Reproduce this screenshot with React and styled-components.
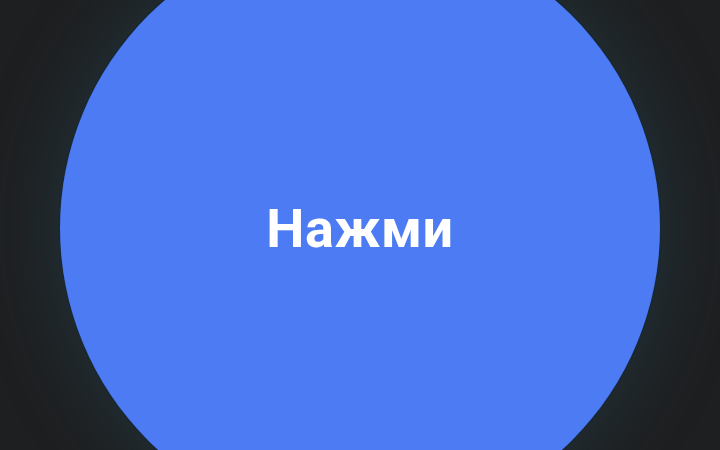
import React from "react";
import styled, { createGlobalStyle } from "styled-components";

const GlobalStyle = createGlobalStyle`
  html, body {
    margin: 0;
    padding: 0;
    background: #1e1f21;
    overflow: hidden;
  }
`;

const Screen = styled.div`
  width: 720px;
  height: 450px;
  display: flex;
  align-items: center;
  justify-content: center;
  overflow: hidden;
  background: #1e1f21;
`;

const Circle = styled.button`
  flex: 0 0 auto;
  width: 600px;
  height: 600px;
  margin-top: 6px;
  border: none;
  border-radius: 50%;
  background: #4d7bf3;
  box-shadow: 0 0 1px 1px rgba(20, 40, 60, 0.8), 0 0 70px 10px rgba(38, 70, 82, 0.45);
  display: flex;
  align-items: center;
  justify-content: center;
  cursor: pointer;
`;

const Label = styled.span`
  font-family: Roboto, "Liberation Sans", sans-serif;
  font-weight: 700;
  font-size: 54px;
  color: #ffffff;
  letter-spacing: 0.5px;
`;

export default function App() {
  return (
    <>
      <GlobalStyle />
      <Screen>
        <Circle>
          <Label>Нажми</Label>
        </Circle>
      </Screen>
    </>
  );
}
